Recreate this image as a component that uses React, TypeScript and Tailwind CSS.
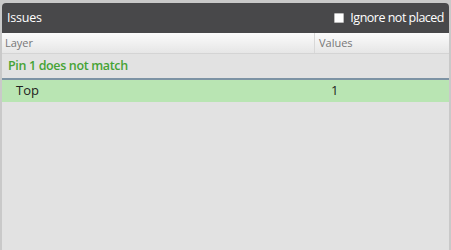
export default function App() {
  return (
    <div
      className="w-[451px] h-[250px] bg-[#c9c9c9] pt-[3px] pl-[2px] pr-[2px] flex flex-col"
      style={{ fontFamily: '"Open Sans", sans-serif' }}
    >
      <div className="flex-1 flex flex-col bg-[#e2e2e2] rounded-t-[4px] overflow-hidden">
        <div className="h-[30px] bg-[#48484a] flex items-center justify-between pl-[5px] pr-[5px] shrink-0">
          <span className="text-white text-[12.5px] tracking-[-0.2px]">Issues</span>
          <label className="flex items-center gap-[6px] text-white text-[12.5px] tracking-[-0.5px]">
            <span className="w-[10px] h-[10px] bg-white rounded-[1px] border border-[#bbb]" />
            Ignore not placed
          </label>
        </div>
        <div className="h-[21px] flex shrink-0 bg-gradient-to-b from-[#fbfbfb] to-[#e6e6e6] border-b border-[#d4d4d4] text-[11px] text-[#777]">
          <div className="w-[313px] pl-[3px] flex items-center border-r border-[#d8d8d8]">Layer</div>
          <div className="flex-1 pl-[4px] flex items-center">Values</div>
        </div>
        <div className="h-[26px] flex items-center pl-[6px] text-[12.5px] font-semibold tracking-[-0.35px] text-[#46a335] border-b-2 border-[#7d93a4] shrink-0">
          Pin 1 does not match
        </div>
        <div className="h-[22px] flex items-center bg-[#b9e5b3] text-[13px] text-[#222] shrink-0">
          <div className="w-[313px] pl-[14px]">Top</div>
          <div className="flex-1 pl-[16px]">1</div>
        </div>
      </div>
    </div>
  );
}
